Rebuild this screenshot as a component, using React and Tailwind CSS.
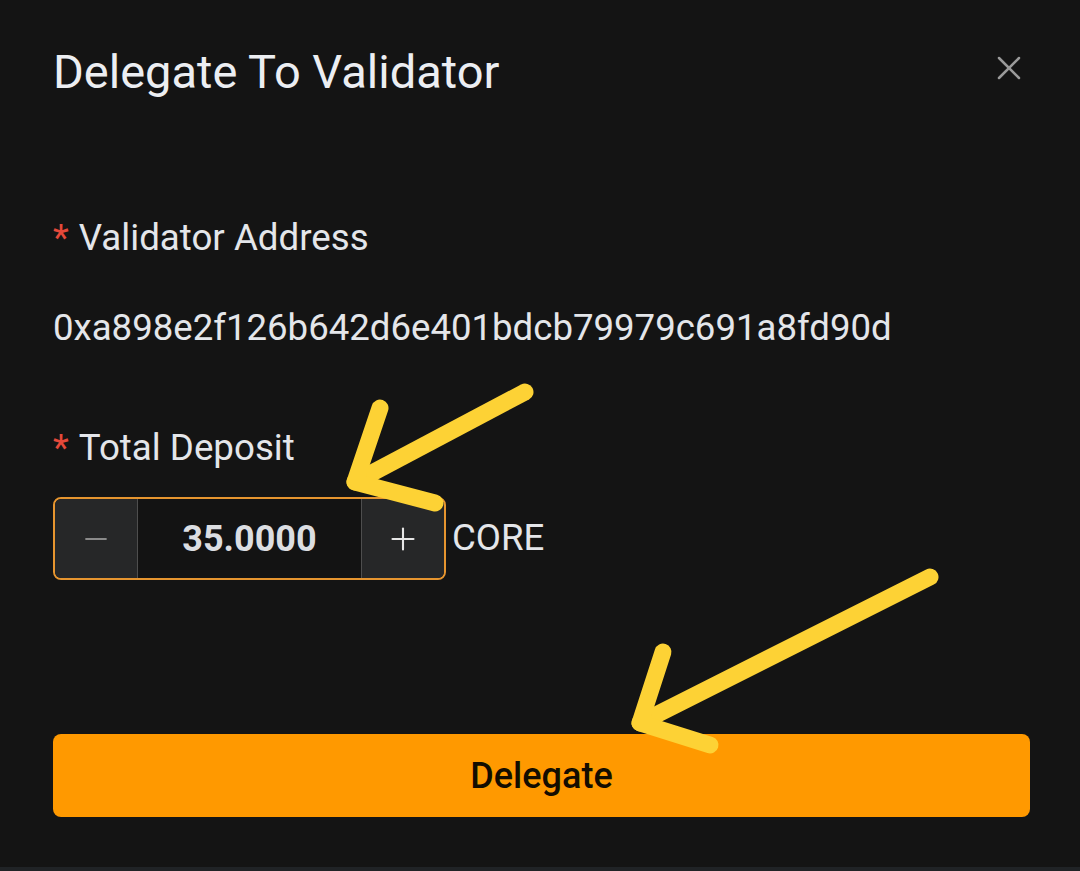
import { X, Minus, Plus } from 'lucide-react';

const Arrows = () => (
    <svg className="pointer-events-none absolute inset-0" width="1080" height="871" viewBox="0 0 1080 871">
        <g fill="none" stroke="#fdd235" strokeWidth="17" strokeLinecap="round" strokeLinejoin="round">
            <path d="M525 392 L355 482" />
            <path d="M380 408 L355 482 L435 503" />
            <path d="M930 577 L640 723" />
            <path d="M663 652 L640 723 L710 745" />
        </g>
    </svg>
);

const Label = ({ children }) => (
    <div className="h-[35px] text-[36.7px] leading-[35px] text-[#e4e6ea]">
        <span className="mr-[10px] text-[#e5493a]">*</span>
        {children}
    </div>
);

export default function App() {
    return (
        <div className="relative w-[1080px] h-[871px] overflow-hidden bg-[#141414]" style={{ fontFamily: 'Roboto, "Noto Sans", sans-serif' }}>
            <div className="h-[867px] pl-[53px] pr-[50px] pt-[48px]">
                <div className="flex items-start justify-between">
                    <h1 className="text-[47px] leading-[48px] h-[48px] text-[#eceef2]">Delegate To Validator</h1>
                    <button className="mr-[1px] text-[#9a9a9a]">
                        <X size={40} strokeWidth={1.5} />
                    </button>
                </div>

                <div className="mt-[124px]">
                    <Label>Validator Address</Label>
                </div>
                <div className="mt-[55px] h-[35px] text-[36.6px] leading-[35px] text-[#e4e6ea]">
                    0xa898e2f126b642d6e401bdcb79979c691a8fd90d
                </div>

                <div className="mt-[85px]">
                    <Label>Total Deposit</Label>
                </div>

                <div className="mt-[32px] flex items-center">
                    <div className="flex h-[83px] w-[393px] overflow-hidden rounded-[8px] border-2 border-[#e6952f]">
                        <button className="flex w-[83px] items-center justify-center border-r border-[#4e4e4e] bg-[#262728] text-[#8a8a8a]">
                            <Minus size={34} strokeWidth={1.4} />
                        </button>
                        <div className="flex flex-1 items-center justify-center bg-[#131313] text-[36px] font-bold text-[#dcdee2]">
                            35.0000
                        </div>
                        <button className="flex w-[83px] items-center justify-center border-l border-[#4e4e4e] bg-[#262728] text-[#e6e6e6]">
                            <Plus size={36} strokeWidth={1.4} />
                        </button>
                    </div>
                    <span className="ml-[6px] text-[36.6px] leading-none text-[#e4e6ea]">CORE</span>
                </div>

                <button className="mt-[154px] flex h-[83px] w-full items-center justify-center rounded-[8px] bg-[#ff9900] text-[36px] font-medium text-[#140d00]">
                    Delegate
                </button>
            </div>
            <div className="h-[4px] bg-[#202326]" />
            <Arrows />
        </div>
    );
}
